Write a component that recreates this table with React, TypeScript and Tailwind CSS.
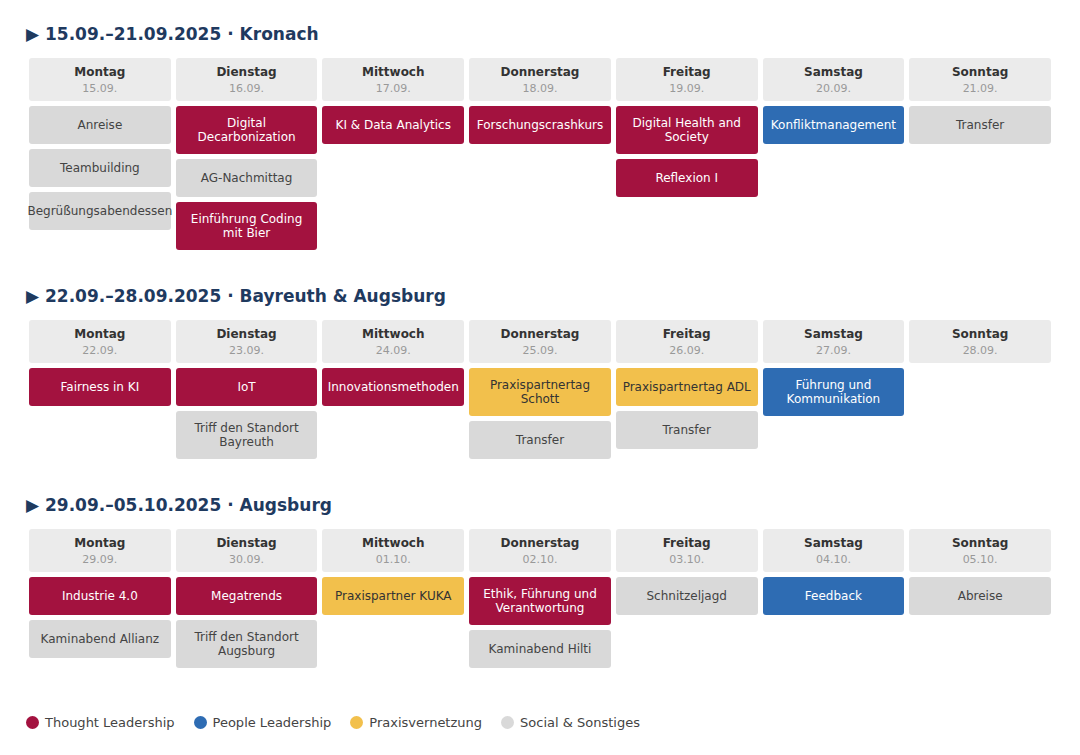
import React from 'react';

type Kind = 'thought' | 'people' | 'praxis' | 'social';

interface Day {
  name: string;
  date: string;
  events: [string, Kind][];
}

interface Week {
  title: string;
  days: Day[];
}

const kindClass: Record<Kind, string> = {
  thought: 'bg-[#a3123f] text-white',
  people: 'bg-[#2e6cb3] text-white',
  praxis: 'bg-[#f2c04c] text-[#333]',
  social: 'bg-[#d9d9d9] text-[#444]',
};

const weeks: Week[] = [
  {
    title: '15.09.–21.09.2025 · Kronach',
    days: [
      { name: 'Montag', date: '15.09.', events: [['Anreise', 'social'], ['Teambuilding', 'social'], ['Begrüßungsabendessen', 'social']] },
      { name: 'Dienstag', date: '16.09.', events: [['Digital Decarbonization', 'thought'], ['AG-Nachmittag', 'social'], ['Einführung Coding mit Bier', 'thought']] },
      { name: 'Mittwoch', date: '17.09.', events: [['KI & Data Analytics', 'thought']] },
      { name: 'Donnerstag', date: '18.09.', events: [['Forschungscrashkurs', 'thought']] },
      { name: 'Freitag', date: '19.09.', events: [['Digital Health and Society', 'thought'], ['Reflexion I', 'thought']] },
      { name: 'Samstag', date: '20.09.', events: [['Konfliktmanagement', 'people']] },
      { name: 'Sonntag', date: '21.09.', events: [['Transfer', 'social']] },
    ],
  },
  {
    title: '22.09.–28.09.2025 · Bayreuth & Augsburg',
    days: [
      { name: 'Montag', date: '22.09.', events: [['Fairness in KI', 'thought']] },
      { name: 'Dienstag', date: '23.09.', events: [['IoT', 'thought'], ['Triff den Standort Bayreuth', 'social']] },
      { name: 'Mittwoch', date: '24.09.', events: [['Innovationsmethoden', 'thought']] },
      { name: 'Donnerstag', date: '25.09.', events: [['Praxispartnertag Schott', 'praxis'], ['Transfer', 'social']] },
      { name: 'Freitag', date: '26.09.', events: [['Praxispartnertag ADL', 'praxis'], ['Transfer', 'social']] },
      { name: 'Samstag', date: '27.09.', events: [['Führung und Kommunikation', 'people']] },
      { name: 'Sonntag', date: '28.09.', events: [] },
    ],
  },
  {
    title: '29.09.–05.10.2025 · Augsburg',
    days: [
      { name: 'Montag', date: '29.09.', events: [['Industrie 4.0', 'thought'], ['Kaminabend Allianz', 'social']] },
      { name: 'Dienstag', date: '30.09.', events: [['Megatrends', 'thought'], ['Triff den Standort Augsburg', 'social']] },
      { name: 'Mittwoch', date: '01.10.', events: [['Praxispartner KUKA', 'praxis']] },
      { name: 'Donnerstag', date: '02.10.', events: [['Ethik, Führung und Verantwortung', 'thought'], ['Kaminabend Hilti', 'social']] },
      { name: 'Freitag', date: '03.10.', events: [['Schnitzeljagd', 'social']] },
      { name: 'Samstag', date: '04.10.', events: [['Feedback', 'people']] },
      { name: 'Sonntag', date: '05.10.', events: [['Abreise', 'social']] },
    ],
  },
];

const legend: [string, string][] = [
  ['Thought Leadership', 'bg-[#a3123f]'],
  ['People Leadership', 'bg-[#2e6cb3]'],
  ['Praxisvernetzung', 'bg-[#f2c04c]'],
  ['Social & Sonstiges', 'bg-[#d9d9d9]'],
];

const WeekBlock: React.FC<{ week: Week }> = ({ week }) => (
  <section className="mb-[31px]">
    <h2 className="pl-[2px] text-[17px] leading-[20px] font-bold text-[#1f3a5f]">▶ {week.title}</h2>
    <div className="mt-[9px] grid grid-cols-7 gap-[5px] p-[5px]">
      {week.days.map((d) => (
        <div key={d.name} className="flex flex-col gap-[5px]">
          <div className="rounded-[3px] bg-[#ebebeb] pt-[7px] pb-[6px] text-center">
            <div className="text-[12px] leading-[14px] font-bold text-[#333]">{d.name}</div>
            <div className="mt-[3px] text-[11px] leading-[13px] text-[#999]">{d.date}</div>
          </div>
          {d.events.map(([label, kind], i) => (
            <div
              key={i}
              className={`flex min-h-[38px] items-center justify-center rounded-[3px] px-1 py-[9.6px] text-center text-[12px] leading-[1.2] ${kindClass[kind]}`}
            >
              {label}
            </div>
          ))}
        </div>
      ))}
    </div>
  </section>
);

export default function App() {
  return (
    <div className="min-h-screen bg-white px-6 pt-[24px] font-['DejaVu_Sans',sans-serif]">
      {weeks.map((w) => (
        <WeekBlock key={w.title} week={w} />
      ))}
      <div className="ml-[2px] mt-[40px] flex items-center gap-[19px] text-[13px] text-[#444]">
        {legend.map(([label, color]) => (
          <div key={label} className="flex items-center gap-[6px]">
            <span className={`inline-block h-[13px] w-[13px] rounded-full ${color}`} />
            {label}
          </div>
        ))}
      </div>
    </div>
  );
}
